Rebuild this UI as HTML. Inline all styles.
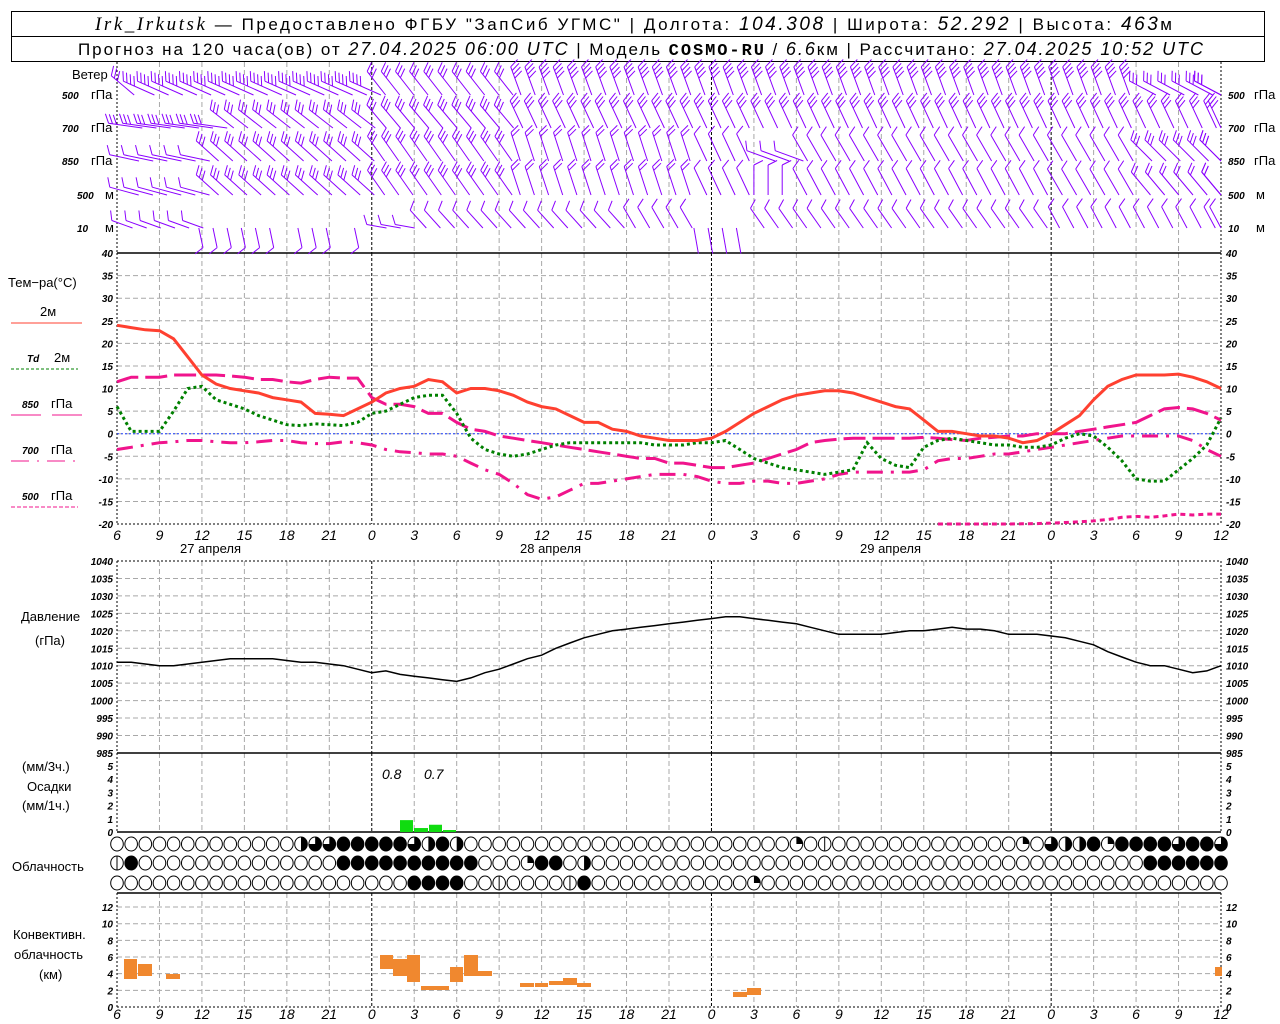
<!DOCTYPE html>
<html><head><meta charset="utf-8"><style>
html,body{margin:0;padding:0;background:#fff;width:1280px;height:1024px;overflow:hidden}
svg{display:block}
.t{font-family:"Liberation Sans","DejaVu Sans",sans-serif;font-size:13px;fill:#000}
.n{font-family:"Liberation Sans","DejaVu Sans",sans-serif;font-size:10px;font-style:italic;font-weight:bold;fill:#000}
.h{font-family:"Liberation Sans","DejaVu Sans",sans-serif;font-size:14px;font-style:italic;fill:#000}
.hd{font-family:"Liberation Sans","DejaVu Sans",sans-serif;font-size:17px;fill:#000}
.it{font-family:"Liberation Serif","DejaVu Serif",serif;font-style:italic;font-size:19px}
.mono{font-family:"Liberation Mono",monospace;font-weight:bold}
</style></head><body>
<svg id="s" width="1280" height="1024" viewBox="0 0 1280 1024" xmlns="http://www.w3.org/2000/svg">
<rect x="11.5" y="11.5" width="1253" height="25" fill="none" stroke="#000"/>
<rect x="11.5" y="36.5" width="1253" height="25" fill="none" stroke="#000"/>
<text x="95" y="30" class="hd" textLength="1077" lengthAdjust="spacing"><tspan class="it">Irk_Irkutsk</tspan> — Предоставлено ФГБУ "ЗапСиб УГМС" | Долгота: <tspan font-style="italic" font-size="19">104.308</tspan> | Широта: <tspan font-style="italic" font-size="19">52.292</tspan> | Высота: <tspan font-style="italic" font-size="19">463</tspan>м</text>
<text x="78" y="55" class="hd" font-size="16" textLength="1125" lengthAdjust="spacing">Прогноз на 120 часа(ов) от <tspan font-style="italic" font-size="18">27.04.2025 06:00 UTC</tspan>  | Модель <tspan class="mono" font-size="17">COSMO-RU</tspan> / <tspan font-style="italic" font-size="18">6.6</tspan>км | Рассчитано: <tspan font-style="italic" font-size="18">27.04.2025 10:52 UTC</tspan></text>

<text x="72" y="79" class="t" font-size="12">Ветер</text>
<g class="n" font-size="11">
<text x="62" y="99">500</text><text x="62" y="132">700</text><text x="62" y="165">850</text><text x="77" y="199">500</text><text x="77" y="232">10</text>
<text x="1228" y="99">500</text><text x="1228" y="132">700</text><text x="1228" y="165">850</text><text x="1228" y="199">500</text><text x="1228" y="232">10</text>
</g>
<g class="t" font-size="11">
<text x="91" y="99">гПа</text><text x="91" y="132">гПа</text><text x="91" y="165">гПа</text><text x="105" y="199">м</text><text x="105" y="232">м</text>
<text x="1254" y="99">гПа</text><text x="1254" y="132">гПа</text><text x="1254" y="165">гПа</text><text x="1256" y="199">м</text><text x="1256" y="232">м</text>
</g>

<text x="8" y="287" class="t">Тем−ра(°C)</text>
<text x="40" y="316" class="t" font-size="11">2м</text>
<line x1="11" y1="323" x2="82" y2="323" stroke="#ff4030" stroke-width="1"/>
<text x="27" y="362" class="n" font-size="11">Td</text><text x="54" y="362" class="t" font-size="11">2м</text>
<line x1="11" y1="369" x2="78" y2="369" stroke="#008000" stroke-dasharray="3,2"/>
<text x="22" y="408" class="n" font-size="11">850</text><text x="51" y="408" class="t" font-size="11">гПа</text>
<line x1="11" y1="415" x2="41" y2="415" stroke="#f0148c"/><line x1="52" y1="415" x2="82" y2="415" stroke="#f0148c"/>
<text x="22" y="454" class="n" font-size="11">700</text><text x="51" y="454" class="t" font-size="11">гПа</text>
<line x1="11" y1="461" x2="78" y2="461" stroke="#f0148c" stroke-dasharray="18,8,2,8"/>
<text x="22" y="500" class="n" font-size="11">500</text><text x="51" y="500" class="t" font-size="11">гПа</text>
<line x1="11" y1="507" x2="78" y2="507" stroke="#f0148c" stroke-dasharray="4,2"/>

<text x="21" y="621" class="t">Давление</text>
<text x="35" y="645" class="t">(гПа)</text>
<text x="22" y="771" class="t">(мм/3ч.)</text>
<text x="27" y="791" class="t">Осадки</text>
<text x="22" y="810" class="t">(мм/1ч.)</text>
<text x="12" y="871" class="t">Облачность</text>
<text x="13" y="939" class="t">Конвективн.</text>
<text x="14" y="959" class="t">облачность</text>
<text x="39" y="979" class="t">(км)</text>

<text x="382" y="779" class="h" font-size="13">0.8</text>
<text x="424" y="779" class="h" font-size="13">0.7</text>

<text x="180" y="553" class="t">27 апреля</text>
<text x="520" y="553" class="t">28 апреля</text>
<text x="860" y="553" class="t">29 апреля</text>

<g id="tl" class="n" font-size="11"></g>
<g id="g"></g>
</svg>
<script>
(function(){
var NS="http://www.w3.org/2000/svg",S=document.getElementById('g'),TL=document.getElementById('tl');
function el(n,a,p){var e=document.createElementNS(NS,n);for(var k in a)e.setAttribute(k,a[k]);(p||S).appendChild(e);return e;}
function X(h){return 117+h*1104/78;}
function yT(t){return 433.7-t*4.517;}
function yP(p){return 561+(1040-p)*3.49;}
function yR(v){return 832-v*13.2;}
function yC(k){return 1007-k*8.33;}
function txt(x,y,s,anchor){var e=el('text',{x:x,y:y,'text-anchor':anchor||'start'},TL);e.textContent=s;}
function hgrid(y){el('line',{x1:117,y1:y,x2:1221,y2:y,stroke:'#a8a8a8','stroke-dasharray':'5,3'});}
for(var t=-15;t<40;t+=5)hgrid(yT(t));
for(var p=990;p<1040;p+=5)hgrid(yP(p));
for(var k=2;k<=12;k+=2)hgrid(yC(k));
var panels=[[62,253],[253,524],[561,753],[753,832],[893,1007]];
for(var h=3;h<78;h+=3){var x=X(h);var day=(h==18||h==42||h==66);
 panels.forEach(function(pp){el('line',{x1:x,y1:pp[0],x2:x,y2:pp[1],stroke:day?'#000':'#a8a8a8','stroke-dasharray':day?'3,2':'5,3'});});}
[117,1221].forEach(function(x){panels.forEach(function(pp){el('line',{x1:x,y1:pp[0],x2:x,y2:pp[1],stroke:'#000','stroke-dasharray':'2,2'});});});
el('line',{x1:117,y1:253,x2:1221,y2:253,stroke:'#000','stroke-width':1.5});
el('line',{x1:117,y1:524,x2:1221,y2:524,stroke:'#000','stroke-dasharray':'2,2'});
el('line',{x1:117,y1:561,x2:1221,y2:561,stroke:'#000','stroke-dasharray':'2,2'});
el('line',{x1:117,y1:753,x2:1221,y2:753,stroke:'#000','stroke-width':1.5});
el('line',{x1:117,y1:832,x2:1221,y2:832,stroke:'#000','stroke-width':1.5});
el('line',{x1:117,y1:893,x2:1221,y2:893,stroke:'#000','stroke-width':1.5});
el('line',{x1:117,y1:1007,x2:1221,y2:1007,stroke:'#000','stroke-dasharray':'2,2'});
el('line',{x1:117,y1:433.7,x2:1221,y2:433.7,stroke:'#2040ff','stroke-dasharray':'2,2'});
for(var t=-20;t<=40;t+=5){var y=yT(t)+4;txt(113,y,String(t),'end');txt(1226,y,String(t));}
for(var p=985;p<=1040;p+=5){var y=yP(p)+4;txt(113,y,String(p),'end');txt(1226,y,String(p));}
for(var v=0;v<=5;v++){var y=yR(v)+4;txt(113,y,String(v),'end');txt(1226,y,String(v));}
for(var k=0;k<=12;k+=2){var y=yC(k)+4;txt(113,y,String(k),'end');txt(1226,y,String(k));}
var hrs=[6,9,12,15,18,21,0,3];
for(var h=0;h<=78;h+=3){var lab=String(hrs[(h/3)%8]);
 var a=el('text',{x:X(h),y:540,'text-anchor':'middle','font-size':14,'font-weight':'normal'},TL);a.textContent=lab;
 var b=el('text',{x:X(h),y:1019,'text-anchor':'middle','font-size':14,'font-weight':'normal'},TL);b.textContent=lab;}
function poly(arr,f,st){var d='';for(var i=0;i<arr.length;i++){if(arr[i]===null)continue;d+=(d?' L':'M')+X(i).toFixed(1)+','+f(arr[i]).toFixed(1);}st.d=d;st.fill='none';el('path',st);}
var T=[24,23.5,23,22.8,21,17,13,11,10,9.5,9,8,7.5,7,4.5,4.3,4,5.5,7,9,10,10.5,12,11.5,9,10,10,9.5,8.5,7,6,5.5,4,2.5,2.5,1,0.5,-0.5,-1,-1.5,-1.5,-1.5,-1,0.5,2.5,4.5,6,7.5,8.5,9,9.5,9.5,9,8,7,6,5.5,3,0.5,0.5,0,-0.5,-0.5,-1,-2,-1.5,0,2,4,7.5,10.5,12,13,13,13,13.2,12.5,11.5,10];
var Td=[6,0.5,0.5,0.5,5,10,10.5,7.5,6.5,5.5,4,3,2,1.8,2.2,2,1.8,2.5,4.5,5,6.5,8,8.5,8.5,4.5,-1,-3.5,-4.5,-5,-4.5,-3.5,-2.5,-2,-2,-2,-2,-2,-2,-2.5,-2.5,-2.5,-2,-2,-1.5,-3.5,-5.5,-6.5,-7.5,-8,-8.5,-9,-8.5,-8,-2,-5.5,-7,-7.5,-3,-1.5,-1,-1.5,-2,-2.5,-2.5,-3,-3,-2.5,-1,0,-0.5,-3,-6,-10,-10.5,-10.5,-8,-5.5,-2.5,3.5];
var P85=[11.5,12.5,12.5,12.5,13,13,13,13,12.8,12.5,12,12,11.5,11.2,12,12.5,12.3,12.3,8,6.5,6.5,6,4.5,4.5,2.5,1,0.5,-0.5,-1,-1.5,-2,-2.5,-3,-3.5,-4,-4.5,-5,-5.5,-5.5,-6.5,-6.5,-7,-7.5,-7.5,-7,-6.5,-5.5,-4.5,-3.5,-2,-1.5,-1.2,-1,-1,-1,-1,-1,-0.8,-1,-1.3,-1.5,-1,-0.8,-0.5,-0.5,0,0,0,0.5,1,1.5,2,2.5,4,5.5,5.8,5.5,4.5,3];
var P70=[-3.5,-3,-2.5,-2,-1.8,-1.5,-1.5,-1.8,-2,-2,-1.8,-1.5,-1.5,-2,-2.2,-2.2,-1.8,-2,-2.5,-3.5,-4,-4.2,-4.5,-4.5,-5,-6.5,-8,-9,-11,-13.5,-14.5,-14,-12.5,-11,-11,-10.5,-10,-9.5,-9,-9,-9,-9.5,-10.5,-11,-11,-10.5,-10.5,-11,-11,-10.5,-10,-9,-8.5,-8.5,-8.5,-8.5,-8.5,-8,-6,-5.5,-5.5,-5,-4.5,-4.5,-4,-3.5,-3,-2.5,-2,-1.5,-1,-0.5,-0.5,-0.5,-0.5,-0.5,-1.5,-3.5,-5];
var P50=[];for(var i=0;i<79;i++)P50.push(null);
[[58,-20],[60,-20],[63,-20],[65,-19.9],[66,-19.8],[68,-19.5],[69,-19.3],[70,-19],[71,-18.5],[72,-18.3],[73,-18.5],[74,-18.2],[75,-17.8],[76,-18],[77,-17.8],[78,-17.8]].forEach(function(a){P50[a[0]]=a[1];});
for(var i=58;i<79;i++)if(P50[i]===null)P50[i]=(P50[i-1]+ (P50[i+1]||P50[i-1]))/2;
poly(P70,yT,{stroke:'#f0148c','stroke-width':3,'stroke-dasharray':'16,8,3,8'});
poly(P85,yT,{stroke:'#f0148c','stroke-width':3,'stroke-dasharray':'22,7'});
poly(P50,yT,{stroke:'#f0148c','stroke-width':3,'stroke-dasharray':'5,4'});
poly(Td,yT,{stroke:'#008000','stroke-width':3,'stroke-dasharray':'3,3'});
poly(T,yT,{stroke:'#ff4030','stroke-width':3});
var PR=[1011,1011,1010.5,1010,1010,1010.5,1011,1011.5,1012,1012,1012,1012,1011.5,1011,1011,1010.5,1010,1009,1008,1008.5,1007.5,1007,1006.5,1006,1005.5,1006.5,1008,1009,1010.5,1012,1013,1015,1016.5,1018,1019,1020,1020.5,1021,1021.5,1022,1022.5,1023,1023.5,1024,1024,1023.5,1023,1022.5,1022,1021,1020,1019,1019,1019,1019,1019.5,1020,1020,1020.5,1021,1020.5,1020.5,1020,1019,1019,1019,1018.5,1018,1017,1016,1014,1012.5,1011,1010,1010,1009,1008,1008.5,1010,1012,1014];
PR=PR.slice(0,79);
poly(PR,yP,{stroke:'#000','stroke-width':1.5});
[[400,413,0.9],[414,428,0.3],[429,442,0.55],[443,456,0.15]].forEach(function(b){el('rect',{x:b[0],y:yR(b[2]),width:b[1]-b[0],height:832-yR(b[2]),fill:'#10dc10'});});
[[124,137,959,979],[138,152,964,976],[166,180,974,979],[380,393,955,969],[393,408,959,976],[407,420,955,982],[421,449,986,990],[450,463,967,982],[464,478,955,976],[478,492,971,976],[520,534,983,987],[535,548,983,987],[549,563,981,985],[563,577,978,985],[577,591,983,987],[733,747,992,997],[747,761,988,995],[1215,1222,967,976]].forEach(function(b){el('rect',{x:b[0],y:b[2],width:b[1]-b[0],height:b[3]-b[2],fill:'#f0882f'});});
function row(spec){var r=[];for(var i=0;i<79;i++)r.push('e');for(var k in spec)r[+k]=spec[k];return r;}
var R1=row({13:'r',14:'t',15:'t',16:'f',17:'f',18:'f',19:'f',20:'f',21:'t',22:'r',23:'f',24:'r',48:'q',50:'v',64:'q',66:'t',67:'r',68:'r',69:'f',70:'q',71:'f',72:'f',73:'f',74:'f',75:'t',76:'f',77:'f',78:'t'});
var R2=row({0:'v',1:'f',16:'f',17:'f',18:'f',19:'f',20:'f',21:'f',22:'f',23:'f',24:'f',25:'f',29:'q',30:'f',31:'f',33:'r',73:'f',74:'f',75:'f',76:'f',77:'f',78:'f'});
var R3=row({21:'f',22:'f',23:'f',24:'f',27:'v',32:'v',33:'f',45:'q'});
[[R1,844],[R2,863],[R3,883]].forEach(function(rr){var r=rr[0],cy=rr[1];
 for(var i=0;i<79;i++){var cx=X(i),s=r[i],rx=6.3,ry=7;
  el('ellipse',{cx:cx,cy:cy,rx:rx,ry:ry,fill:s=='f'?'#000':'#fff',stroke:'#000','stroke-width':1});
  if(s=='r')el('path',{d:'M'+cx+','+(cy-ry)+' A'+rx+','+ry+' 0 0 1 '+cx+','+(cy+ry)+' Z',fill:'#000'});
  if(s=='t')el('path',{d:'M'+cx+','+(cy-ry)+' A'+rx+','+ry+' 0 1 1 '+(cx-rx)+','+cy+' L'+cx+','+cy+' Z',fill:'#000'});
  if(s=='q')el('path',{d:'M'+cx+','+(cy-ry)+' A'+rx+','+ry+' 0 0 1 '+(cx+rx)+','+cy+' L'+cx+','+cy+' Z',fill:'#000'});
  if(s=='v')el('line',{x1:cx,y1:cy-ry,x2:cx,y2:cy+ry,stroke:'#000'});
 }});
var rows=[95,128,161,195,228];
function seg(list){return function(h){for(var i=0;i<list.length;i++){var s=list[i];if(h>=s[0]&&h<=s[1])return [s[2],s[3],s[4]||30];}return null;};}
var W=[
 seg([[0,0,-50,3],[1,17,-66,4,34],[18,27,-38,3],[28,71,-20,4],[72,78,-62,3]]),
 seg([[0,6,-82,3,34],[7,17,-52,3],[18,27,-40,3],[28,78,-25,3]]),
 seg([[0,5,-78,1],[6,17,-48,3],[18,27,-35,3],[28,40,-18,2],[41,44,-25,1],[45,47,-70,1],[48,65,-30,1],[66,71,-30,1],[72,78,-45,3]]),
 seg([[0,5,-75,1],[6,17,-48,3],[18,27,-35,3],[28,40,-18,2],[41,44,-25,1],[45,47,0,1],[48,65,-28,1],[66,71,-30,1],[72,78,-40,2]]),
 seg([[0,5,-70,1,22],[6,17,168,1,20],[18,20,-80,1,20],[21,35,-42,1,24],[36,40,-30,1,24],[41,44,170,0,26],[45,65,-35,1,24],[66,78,-28,1,24]])
];
var wc='#8a00ff';
for(var r=0;r<5;r++){for(var h=0;h<=78;h++){var d=W[r](h);if(!d)continue;
 if(r==4&&(h==12||h==16))continue;
 var a=d[0]*Math.PI/180,n=d[1],L=d[2];
 var ux=Math.sin(a),uy=-Math.cos(a);
 var bx=X(h)-ux*L*0.75,by=rows[r];
 if(bx>1221)bx=1221;
 var tx=bx+ux*L,ty=by+uy*L;
 if(ty<64){var f=(by-64)/(by-ty);tx=bx+(tx-bx)*f;ty=64;}
 var dd='M'+bx.toFixed(1)+','+by+' L'+tx.toFixed(1)+','+ty.toFixed(1);
 var px=Math.cos(a),py=Math.sin(a);
 var fx=(0.45*ux+0.9*px)*10,fy=(0.45*uy+0.9*py)*10;
 for(var k=0;k<n;k++){var sx=tx-ux*k*4,sy=ty-uy*k*4;dd+=' M'+sx.toFixed(1)+','+sy.toFixed(1)+' l'+fx.toFixed(1)+','+fy.toFixed(1);}
 el('path',{d:dd,stroke:wc,'stroke-width':1,fill:'none'});
}}
})();
</script>
</body></html>
